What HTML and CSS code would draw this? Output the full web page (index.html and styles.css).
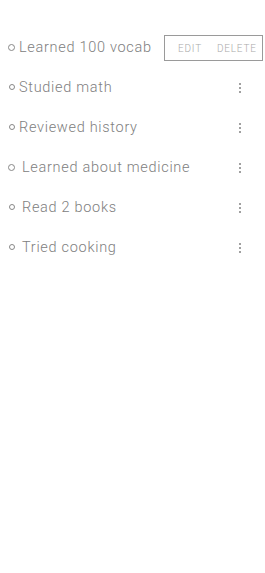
FILE: index.html
```html
<!DOCTYPE html>
<html>
<head>
<meta charset="utf-8">
<link rel="stylesheet" href="styles.css">
</head>
<body>
<ul class="list">
  <li class="item">
    <span class="bullet big"></span><span class="label">Learned 100 vocab</span>
    <div class="menu"><span class="menu-btn">EDIT</span><span class="menu-btn">DELETE</span></div>
  </li>
  <li class="item">
    <span class="bullet"></span><span class="label">Studied math</span>
    <span class="kebab"><i></i><i></i><i></i></span>
  </li>
  <li class="item">
    <span class="bullet"></span><span class="label">Reviewed history</span>
    <span class="kebab"><i></i><i></i><i></i></span>
  </li>
  <li class="item">
    <span class="bullet big wide"></span><span class="label">Learned about medicine</span>
    <span class="kebab"><i></i><i></i><i></i></span>
  </li>
  <li class="item">
    <span class="bullet wide"></span><span class="label">Read 2 books</span>
    <span class="kebab"><i></i><i></i><i></i></span>
  </li>
  <li class="item">
    <span class="bullet wide"></span><span class="label">Tried cooking</span>
    <span class="kebab"><i></i><i></i><i></i></span>
  </li>
</ul>
</body>
</html>
```
FILE: styles.css
```css
html, body {
  margin: 0;
  padding: 0;
  background: #fff;
}
body {
  font-family: Roboto, "Noto Sans", sans-serif;
  font-weight: 300;
  color: #808080;
  width: 265px;
  height: 573px;
}
.list {
  list-style: none;
  margin: 0;
  padding: 27px 0 0 0;
}
.item {
  position: relative;
  height: 40px;
  display: flex;
  align-items: center;
  padding-left: 9px;
  padding-right: 24px;
  font-size: 14.5px;
  letter-spacing: 0.7px;
}
.bullet {
  width: 4px;
  height: 4px;
  border: 1px solid #888;
  border-radius: 50%;
  margin-right: 4px;
  flex: none;
}
.bullet.big {
  width: 5px;
  height: 5px;
  margin-left: -1px;
  margin-right: 4px;
}
.bullet.wide {
  margin-right: 7px;
}
.label {
  flex: 1;
  white-space: nowrap;
}
.kebab {
  display: flex;
  flex-direction: column;
  gap: 2px;
  width: 2px;
  margin-top: 1px;
}
.kebab i {
  display: block;
  width: 2px;
  height: 2px;
  background: #a0a0a0;
}
.menu {
  position: absolute;
  left: 164px;
  top: 8px;
  box-sizing: content-box;
  width: 84px;
  height: 24px;
  padding-left: 13px;
  border: 1px solid #9a9a9a;
  display: flex;
  align-items: center;
  gap: 15px;
  background: #fff;
}
.menu-btn {
  font-size: 10px;
  color: #aaaaaa;
  letter-spacing: 0.8px;
}
```
